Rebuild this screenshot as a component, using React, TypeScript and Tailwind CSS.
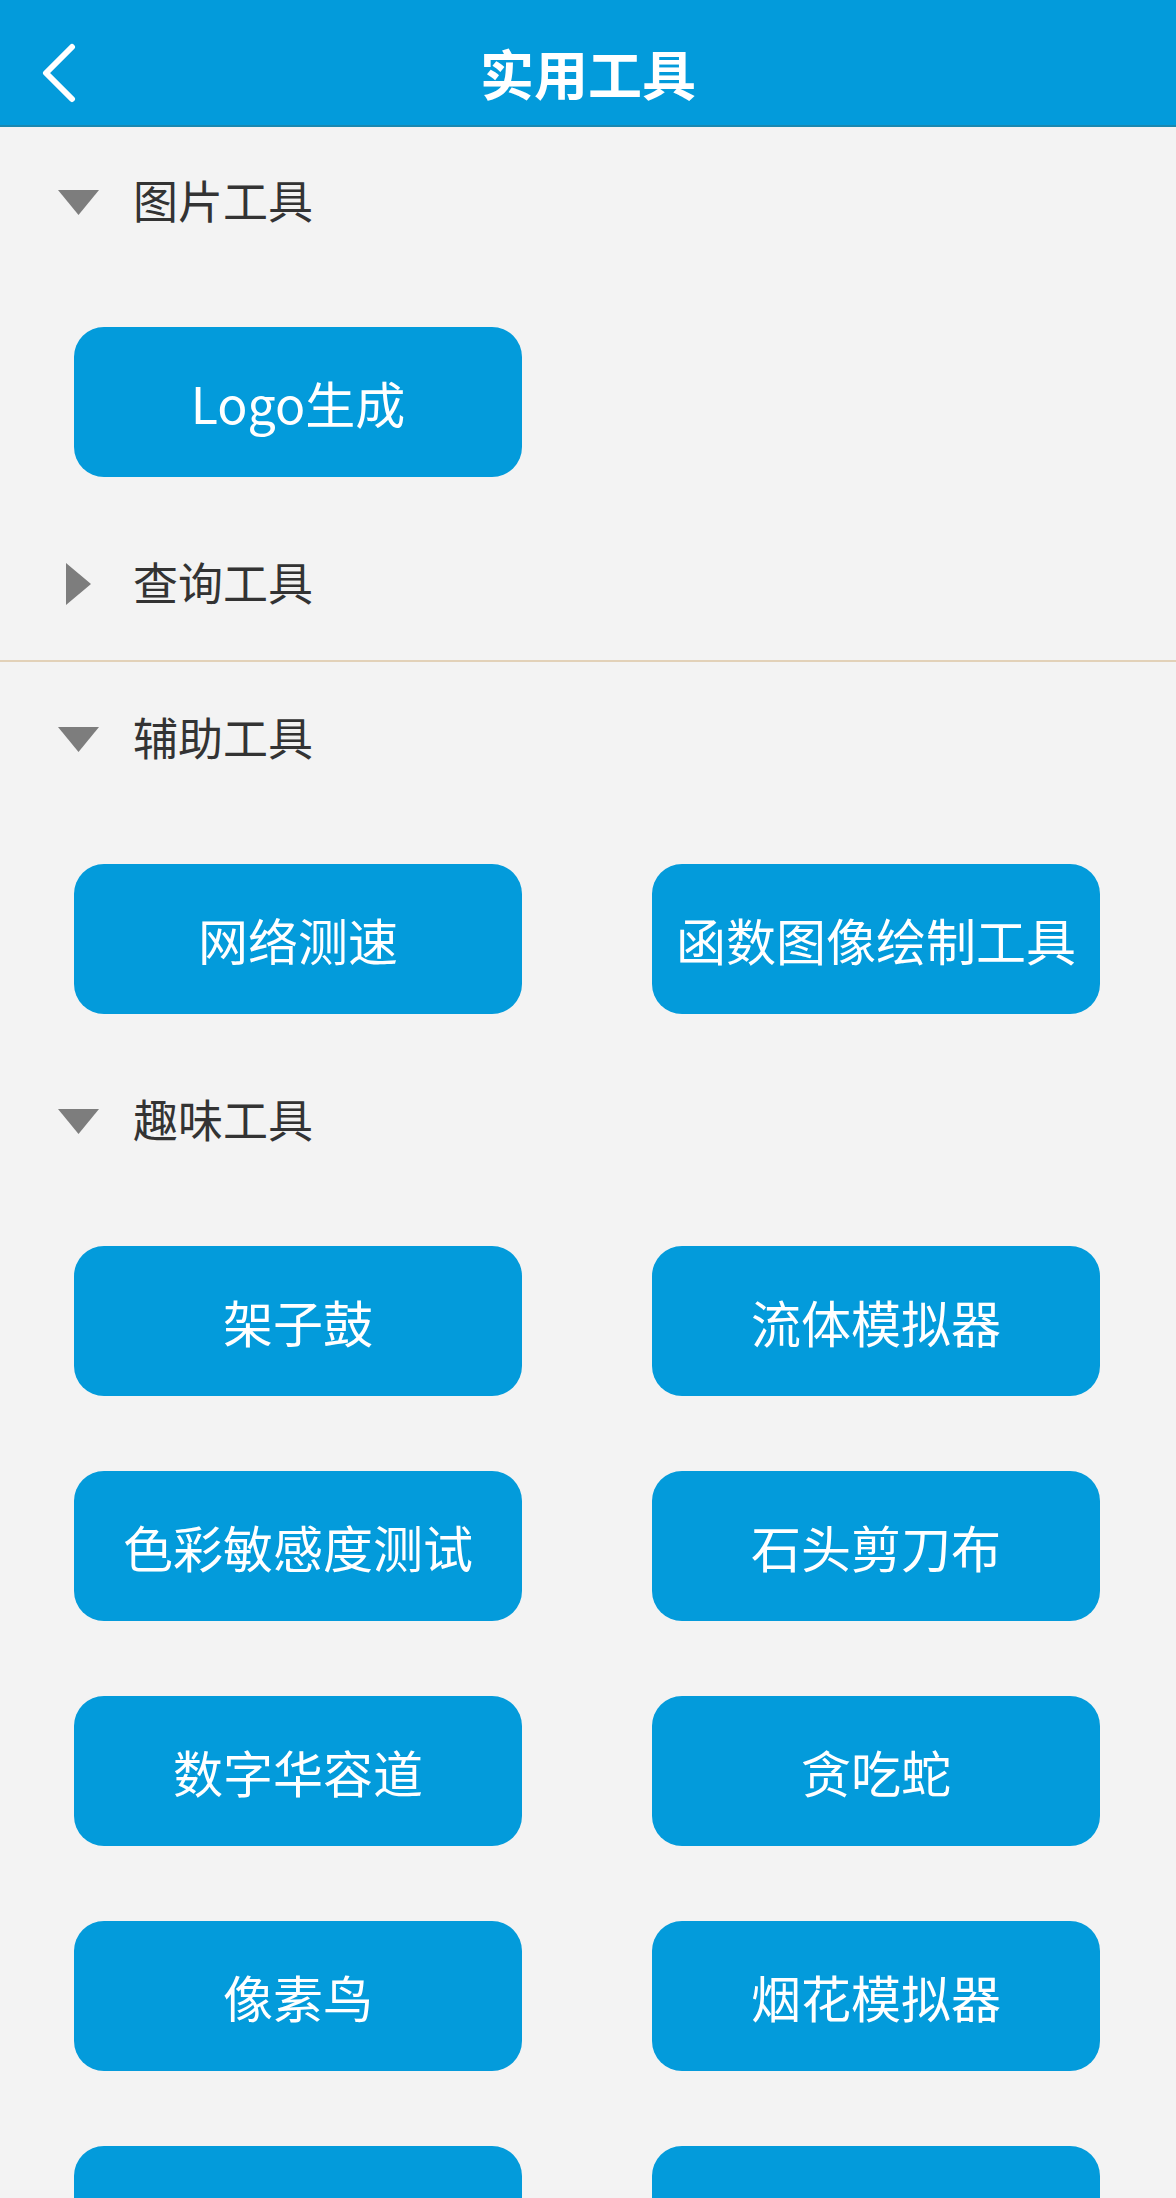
import React, { useState } from 'react';

interface ToolGroup {
    id: string;
    title: string;
    tools: string[];
    expanded: boolean;
}

const initialGroups: ToolGroup[] = [
    { id: 'image', title: '图片工具', tools: ['Logo生成'], expanded: true },
    { id: 'query', title: '查询工具', tools: ['快递查询'], expanded: false },
    { id: 'assist', title: '辅助工具', tools: ['网络测速', '函数图像绘制工具'], expanded: true },
    {
        id: 'fun',
        title: '趣味工具',
        tools: [
            '架子鼓',
            '流体模拟器',
            '色彩敏感度测试',
            '石头剪刀布',
            '数字华容道',
            '贪吃蛇',
            '像素鸟',
            '烟花模拟器',
            '',
            ' ',
        ],
        expanded: true,
    },
];

const Caret = ({ open }: { open: boolean }) => (
    <span className="w-[41px] mr-[34px] flex items-center justify-center shrink-0">
        {open ? (
            <svg width="41" height="25" viewBox="0 0 41 25">
                <polygon points="0,0 41,0 20.5,25" fill="#7d7d7d" />
            </svg>
        ) : (
            <svg width="25" height="42" viewBox="0 0 25 42">
                <polygon points="0,0 25,21 0,42" fill="#7d7d7d" />
            </svg>
        )}
    </span>
);

export default function App() {
    const [groups, setGroups] = useState<ToolGroup[]>(initialGroups);

    const toggle = (id: string) => {
        setGroups((prev) => prev.map((g) => (g.id === id ? { ...g, expanded: !g.expanded } : g)));
    };

    return (
        <div
            className="min-h-screen bg-[#f3f3f3]"
            style={{ fontFamily: '"Noto Sans CJK SC", "Noto Sans", sans-serif' }}
        >
            {/* Title bar */}
            <header className="h-[127px] bg-[#039bdb] border-b-2 border-[#1a88b0] pt-[20px] grid grid-cols-[1fr_auto_1fr] items-center">
                <button className="justify-self-start pl-[42px] flex items-center h-full">
                    <svg width="34" height="60" viewBox="0 0 34 60" fill="none">
                        <path
                            d="M30 4 L4 30 L30 56"
                            stroke="#ffffff"
                            strokeWidth="6"
                            strokeLinecap="round"
                            strokeLinejoin="round"
                        />
                    </svg>
                </button>
                <h1 className="text-white font-bold text-[54px] leading-none tracking-normal">实用工具</h1>
                <div />
            </header>

            <main className="pt-[27px]">
                {groups.map((group) => (
                    <section key={group.id}>
                        <div
                            onClick={() => toggle(group.id)}
                            className="h-[96px] pl-[58px] flex items-center cursor-pointer"
                        >
                            <Caret open={group.expanded} />
                            <span className="text-[45px] leading-none text-[#333333] pb-[5px]">{group.title}</span>
                        </div>

                        {group.expanded ? (
                            <div className="grid grid-cols-2 gap-x-[130px] gap-y-[75px] pl-[74px] pr-[76px] pt-[77px] pb-[59px]">
                                {group.tools.map((tool, i) => (
                                    <button
                                        key={`${group.id}-${i}`}
                                        className="h-[150px] rounded-[30px] bg-[#039bdb] text-white text-[50px] leading-none flex items-center justify-center whitespace-nowrap"
                                    >
                                        {tool.trim()}
                                    </button>
                                ))}
                            </div>
                        ) : (
                            <div className="pt-[28px] pb-[29px]">
                                <div className="h-[2px] bg-[#e2d1b8]" />
                            </div>
                        )}
                    </section>
                ))}
            </main>
        </div>
    );
}
